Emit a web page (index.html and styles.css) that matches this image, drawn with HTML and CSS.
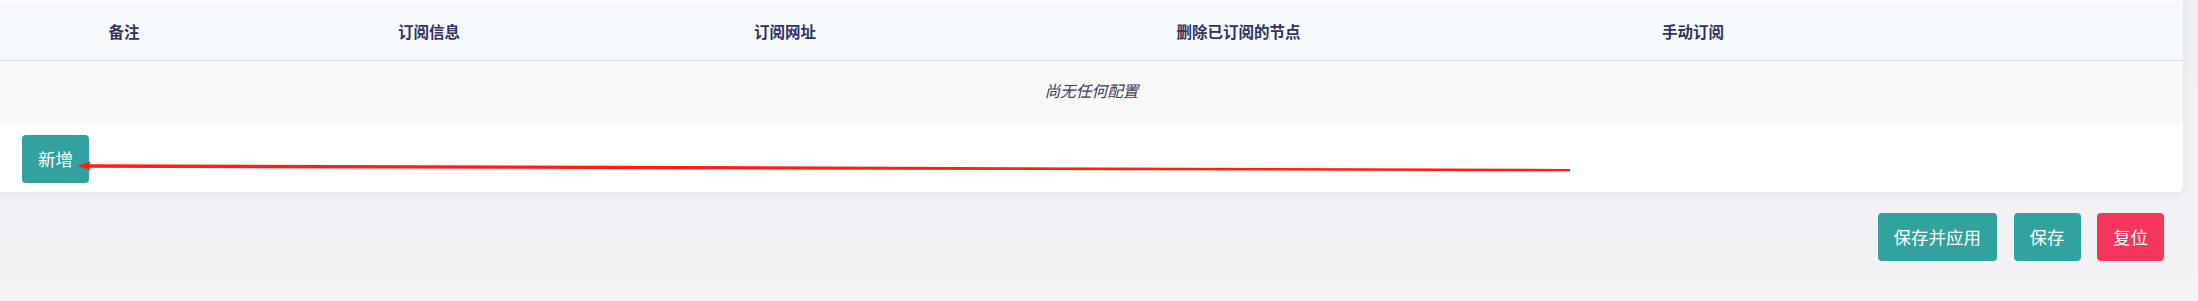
FILE: index.html
```html
<!DOCTYPE html>
<html lang="zh-CN">
<head>
<meta charset="utf-8">
<title>订阅</title>
<link rel="stylesheet" href="styles.css">
</head>
<body>
<div class="page">
  <div class="card">
    <div class="table">
      <div class="thead">
        <div class="th">备注</div>
        <div class="th">订阅信息</div>
        <div class="th">订阅网址</div>
        <div class="th">删除已订阅的节点</div>
        <div class="th">手动订阅</div>
        <div class="th"></div>
      </div>
      <div class="empty-row"><em>尚无任何配置</em></div>
    </div>
    <div class="section-actions">
      <button class="btn btn-teal">新增</button>
    </div>
  </div>
  <div class="page-actions">
    <button class="btn btn-teal">保存并应用</button>
    <button class="btn btn-teal">保存</button>
    <button class="btn btn-red">复位</button>
  </div>
  <svg class="annotation" width="2198" height="301" viewBox="0 0 2198 301">
    <polygon points="88,164.2 1570,168.9 1570,171.3 88,167.8" fill="#ff1e12"/>
    <polygon points="77,166 91,161.6 88,166 91,170.4" fill="#ff1e12"/>
  </svg>
</div>
</body>
</html>
```
FILE: styles.css
```css
html, body {
  margin: 0;
  padding: 0;
}
body {
  background: linear-gradient(#eeeff2, #f3f3f6);
  font-family: "Noto Sans CJK SC", "Noto Sans", sans-serif;
  width: 2198px;
  height: 301px;
  overflow: hidden;
}
.page {
  position: relative;
  width: 2198px;
  height: 301px;
}
.card {
  width: 2183px;
  background: #ffffff;
  padding-top: 1px;
  border-radius: 0 0 6px 0;
  box-shadow: 0 3px 10px rgba(40, 40, 70, 0.05);
}
.thead {
  display: grid;
  grid-template-columns: 248px 362px 350px 557px 352px 1fr;
  height: 59px;
  background: #f6f9fc;
  border-bottom: 1px solid #dcdcde;
  align-items: center;
}
.th {
  text-align: center;
  font-size: 15.5px;
  font-weight: 700;
  color: #32325d;
  line-height: 20px;
}
.empty-row {
  height: 60px;
  padding-bottom: 4px;
  background: #f9f9f9;
  display: flex;
  align-items: center;
  justify-content: center;
}
.empty-row em {
  font-size: 15.7px;
  font-style: italic;
  color: #3c3c5e;
  line-height: 20px;
}
.section-actions {
  padding: 10px 0 9px 22px;
  display: flex;
}
.btn {
  height: 48px;
  padding: 0 16px;
  border: none;
  border-radius: 4px;
  color: #ffffff;
  font-family: "Noto Sans CJK SC", "Noto Sans", sans-serif;
  font-size: 17.5px;
  line-height: 48px;
  cursor: pointer;
}
.btn-teal {
  background: #32a2a1;
}
.btn-red {
  background: #f5365c;
}
.page-actions {
  display: flex;
  justify-content: flex-end;
  gap: 16.5px;
  padding: 21px 34px 0 0;
}
.annotation {
  position: absolute;
  top: 0;
  left: 0;
  pointer-events: none;
}
```
